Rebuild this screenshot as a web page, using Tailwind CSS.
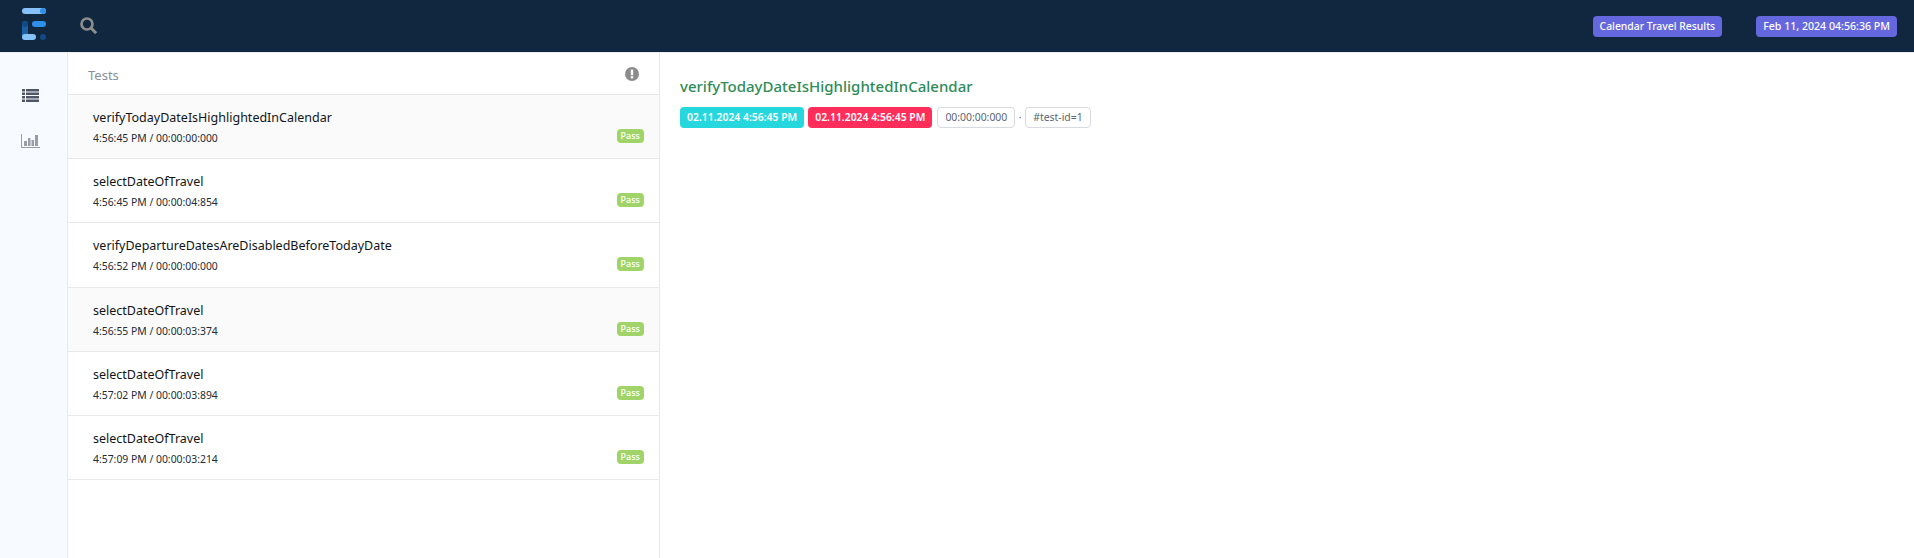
<!DOCTYPE html>
<html><head><meta charset="utf-8"><script src="https://cdn.jsdelivr.net/npm/@tailwindcss/browser@4"></script></head>
<body class="bg-white font-['Noto_Sans',sans-serif] overflow-hidden">
<div class="w-[1914px] h-[558px] flex flex-col">
<header class="h-[52px] shrink-0 bg-[#11263f] flex items-center">
  <svg class="ml-[22px] -mt-[4px]" width="24" height="32" viewBox="0 0 24 32"><rect x="0" y="0" width="24" height="6" rx="3" fill="#86c1fb"/><circle cx="21" cy="3" r="3" fill="#2d8fe8"/><rect x="0" y="13" width="6" height="19" rx="3" fill="#1a5fa6"/><circle cx="3" cy="16" r="3" fill="#134a85"/><rect x="10" y="13" width="14" height="6" rx="3" fill="#2d8fe8"/><rect x="0" y="26" width="14" height="6" rx="3" fill="#86c1fb"/><circle cx="21" cy="29" r="3" fill="#134a85"/></svg>
  <svg class="ml-[34px] -mt-[1px]" width="17" height="17" viewBox="0 0 17 17" fill="none" stroke="#8c8c8c"><circle cx="7" cy="7" r="5.5" stroke-width="2.7"/><path d="M11 11 L16.2 16.2" stroke-width="3"/></svg>
  <div class="ml-auto flex items-center gap-[34px] pr-[17px] mt-[1px]">
    <span class="h-[21px] flex items-center px-[7px] rounded-[4px] bg-[#6467dd] text-white text-[10.4px] font-medium whitespace-nowrap">Calendar Travel Results</span>
    <span class="h-[21px] flex items-center px-[7px] rounded-[4px] bg-[#6467dd] text-white text-[10.6px] font-medium whitespace-nowrap">Feb 11, 2024 04:56:36 PM</span>
  </div>
</header>
<div class="flex flex-1 min-h-0 border-t border-[#ececec]">
  <nav class="w-[68px] shrink-0 bg-[#f7faff] border-r border-[#e5e8ec] flex flex-col items-start pl-[21px] pt-[36px] gap-[32px]">
    <svg class="ml-[1px]" width="17" height="13" viewBox="0 0 17 13" fill="#4f5467"><rect x="0" y="0" width="3" height="2.5"/><rect x="4" y="0" width="13" height="2.5"/><rect x="0" y="3.5" width="3" height="2.5"/><rect x="4" y="3.5" width="13" height="2.5"/><rect x="0" y="7" width="3" height="2.5"/><rect x="4" y="7" width="13" height="2.5"/><rect x="0" y="10.5" width="3" height="2.5"/><rect x="4" y="10.5" width="13" height="2.5"/></svg>
    <svg width="19" height="14" viewBox="0 0 19 14" fill="#9a9da6"><rect x="0" y="0" width="1" height="14"/><rect x="0" y="13" width="19" height="1"/><rect x="3" y="7" width="3" height="5"/><rect x="7" y="4" width="2.5" height="8"/><rect x="10.5" y="6" width="2.5" height="6"/><rect x="14" y="1" width="3" height="11"/></svg>
  </nav>
  <section class="w-[592px] shrink-0 border-r border-[#e8e8e8] flex flex-col">
    <div class="h-[42px] shrink-0 flex items-center justify-between px-[20px] pt-[1px] border-b border-[#e8e8e8]">
      <span class="text-[13px] mt-[3px] text-[#8a8f96]">Tests</span>
      <svg width="14" height="14" viewBox="0 0 14 14"><circle cx="7" cy="7" r="7" fill="#8c8c8c"/><rect x="5.8" y="2.6" width="2.4" height="5.6" fill="#fff"/><rect x="5.8" y="9.2" width="2.4" height="2.2" fill="#fff"/></svg>
    </div>
    <div class="h-[64px] flex justify-between bg-[#fafafa] border-b border-[#e8e8e8] pl-[25px] pr-[15px] pt-[13px]">
      <div><p class="text-[12.5px] leading-[20px] text-[#11151a]">verifyTodayDateIsHighlightedInCalendar</p><p class="mt-[2px] text-[10.4px] leading-[16px] text-[#252b33]">4:56:45 PM / 00:00:00:000</p></div>
      <span class="self-end mb-[15px] h-[14px] px-[4px] flex items-center rounded-[4px] bg-[#a0d468] text-white text-[9px] font-medium">Pass</span>
    </div>
    <div class="h-[64px] flex justify-between border-b border-[#e8e8e8] pl-[25px] pr-[15px] pt-[13px]">
      <div><p class="text-[12.5px] leading-[20px] text-[#11151a]">selectDateOfTravel</p><p class="mt-[2px] text-[10.4px] leading-[16px] text-[#252b33]">4:56:45 PM / 00:00:04:854</p></div>
      <span class="self-end mb-[15px] h-[14px] px-[4px] flex items-center rounded-[4px] bg-[#a0d468] text-white text-[9px] font-medium">Pass</span>
    </div>
    <div class="h-[65px] flex justify-between border-b border-[#e8e8e8] pl-[25px] pr-[15px] pt-[13px]">
      <div><p class="text-[12.5px] leading-[20px] text-[#11151a]">verifyDepartureDatesAreDisabledBeforeTodayDate</p><p class="mt-[2px] text-[10.4px] leading-[16px] text-[#252b33]">4:56:52 PM / 00:00:00:000</p></div>
      <span class="self-end mb-[16px] h-[14px] px-[4px] flex items-center rounded-[4px] bg-[#a0d468] text-white text-[9px] font-medium">Pass</span>
    </div>
    <div class="h-[64px] flex justify-between bg-[#fafafa] border-b border-[#e8e8e8] pl-[25px] pr-[15px] pt-[13px]">
      <div><p class="text-[12.5px] leading-[20px] text-[#11151a]">selectDateOfTravel</p><p class="mt-[2px] text-[10.4px] leading-[16px] text-[#252b33]">4:56:55 PM / 00:00:03:374</p></div>
      <span class="self-end mb-[15px] h-[14px] px-[4px] flex items-center rounded-[4px] bg-[#a0d468] text-white text-[9px] font-medium">Pass</span>
    </div>
    <div class="h-[64px] flex justify-between border-b border-[#e8e8e8] pl-[25px] pr-[15px] pt-[13px]">
      <div><p class="text-[12.5px] leading-[20px] text-[#11151a]">selectDateOfTravel</p><p class="mt-[2px] text-[10.4px] leading-[16px] text-[#252b33]">4:57:02 PM / 00:00:03:894</p></div>
      <span class="self-end mb-[15px] h-[14px] px-[4px] flex items-center rounded-[4px] bg-[#a0d468] text-white text-[9px] font-medium">Pass</span>
    </div>
    <div class="h-[64px] flex justify-between border-b border-[#e8e8e8] pl-[25px] pr-[15px] pt-[13px]">
      <div><p class="text-[12.5px] leading-[20px] text-[#11151a]">selectDateOfTravel</p><p class="mt-[2px] text-[10.4px] leading-[16px] text-[#252b33]">4:57:09 PM / 00:00:03:214</p></div>
      <span class="self-end mb-[15px] h-[14px] px-[4px] flex items-center rounded-[4px] bg-[#a0d468] text-white text-[9px] font-medium">Pass</span>
    </div>
  </section>
  <main class="flex-1 pl-[20px] pt-[22px]">
    <h2 class="text-[15px] leading-[22px] text-[#2e8b57] font-medium">verifyTodayDateIsHighlightedInCalendar</h2>
    <div class="mt-[10px] flex items-center text-[10.4px]">
      <span class="h-[21px] flex items-center px-[7px] rounded-[4px] bg-[#26d7dd] text-white font-semibold whitespace-nowrap">02.11.2024 4:56:45 PM</span>
      <span class="ml-[4px] h-[21px] flex items-center px-[7px] rounded-[4px] bg-[#ff2d5a] text-white font-semibold whitespace-nowrap">02.11.2024 4:56:45 PM</span>
      <span class="ml-[5px] h-[21px] flex items-center px-[7px] rounded-[4px] border border-[#d8dbe0] text-[#5d6470] whitespace-nowrap">00:00:00:000</span>
      <span class="w-[10px] flex justify-center text-[#5d6470]">·</span>
      <span class="h-[21px] flex items-center px-[7px] rounded-[4px] border border-[#d8dbe0] text-[#5d6470] whitespace-nowrap">#test-id=1</span>
    </div>
  </main>
</div>
</div>
</body></html>
